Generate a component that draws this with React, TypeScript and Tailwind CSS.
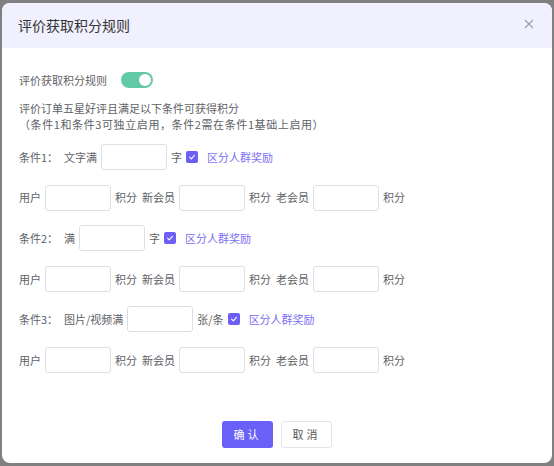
import React, { useState } from 'react';

const Input = () => (
  <input className="h-[26px] w-[66px] rounded-[3px] border border-[#dcdfe6] bg-white px-2 text-[11px] outline-none" />
);

const Check = () => (
  <span className="flex h-[12px] w-[12px] items-center justify-center rounded-[2px] bg-[#6b5ff6]">
    <svg width="8" height="8" viewBox="0 0 10 10" fill="none">
      <path d="M2 5.2 L4.2 7.3 L8 3" stroke="white" strokeWidth="1.4" strokeLinecap="round" strokeLinejoin="round" />
    </svg>
  </span>
);

const Condition = ({ label, text, unit }: { label: string; text: string; unit: string }) => (
  <div className="flex h-[26px] items-center">
    <span className="w-[45px]">{label}</span>
    <span className="mr-[4px]">{text}</span>
    <Input />
    <span className="mx-[4px]">{unit}</span>
    <Check />
    <span className="ml-[9px] text-[#7b6ff2]">区分人群奖励</span>
  </div>
);

const Mid = ({ who }: { who: string }) => (
  <span className="mx-[4px] flex gap-[5px]">
    <span>积分</span>
    <span>{who}</span>
  </span>
);

const PointsRow = () => (
  <div className="flex h-[26px] items-center">
    <span className="mr-[4px]">用户</span>
    <Input />
    <Mid who="新会员" />
    <Input />
    <Mid who="老会员" />
    <Input />
    <span className="ml-[4px]">积分</span>
  </div>
);

const App = () => {
  const [on, setOn] = useState(true);

  return (
    <div
      className="h-[466px] w-[554px] overflow-hidden bg-[#808080] pl-[2px] pt-[3px] text-[11px] text-[#606266]"
      style={{ fontFamily: '"Noto Sans CJK SC", "Noto Sans", sans-serif' }}
    >
      <div className="h-[460px] w-[550px] overflow-hidden rounded-[8px] bg-white">
        {/* Header */}
        <div className="flex h-[45px] items-center justify-between bg-[#f0f0fe] pl-[16px] pr-[18px]">
          <h1 className="text-[14px] text-[#333]">评价获取积分规则</h1>
          <svg width="10" height="10" viewBox="0 0 10 10" className="mt-[-4px]">
            <path d="M1 1 L9 9 M9 1 L1 9" stroke="#a0a0a8" strokeWidth="1.1" />
          </svg>
        </div>

        {/* Body */}
        <div className="pl-[17px] pt-[24px]">
          <div className="flex h-[16px] items-center">
            <span>评价获取积分规则</span>
            <button
              onClick={() => setOn(!on)}
              className={`ml-[14px] flex h-[16px] w-[32px] items-center rounded-full px-[2px] ${on ? 'justify-end bg-[#62caa6]' : 'justify-start bg-[#dcdfe6]'}`}
            >
              <span className="h-[12px] w-[12px] rounded-full bg-white" />
            </button>
          </div>

          <div className="mt-[12px] leading-[16px]">
            <p>评价订单五星好评且满足以下条件可获得积分</p>
            <p className="tracking-[0.6px]">（条件1和条件3可独立启用，条件2需在条件1基础上启用）</p>
          </div>

          <div className="mt-[12px] flex flex-col gap-[14.6px]">
            <Condition label="条件1：" text="文字满" unit="字" />
            <PointsRow />
            <Condition label="条件2：" text="满" unit="字" />
            <PointsRow />
            <Condition label="条件3：" text="图片/视频满" unit="张/条" />
            <PointsRow />
          </div>
        </div>

        {/* Footer */}
        <div className="mt-[48px] flex justify-center gap-[8px]">
          <button className="h-[27px] w-[51px] rounded-[3px] bg-[#6a5ff6] text-[11px] tracking-[3px] text-white">
            确认
          </button>
          <button className="h-[27px] w-[51px] rounded-[3px] border border-[#e4e4ec] bg-white text-[11px] tracking-[3px] text-[#555]">
            取消
          </button>
        </div>
      </div>
    </div>
  );
};

export default App;
